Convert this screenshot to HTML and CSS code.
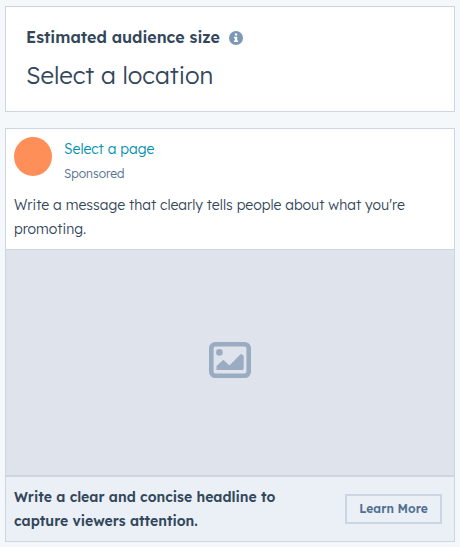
FILE: index.html
```html
<!DOCTYPE html>
<html lang="en">
<head>
<meta charset="utf-8">
<title>Ad preview</title>
<link rel="stylesheet" href="styles.css">
</head>
<body>
<section class="card audience">
  <div class="audience-label"><span class="label-text">Estimated audience size</span>
    <svg class="info" viewBox="0 0 14 14"><circle cx="7" cy="7" r="7" fill="#7c98b6"/><path d="M5.900 2.600h2.300v2H5.900zM5 5.800h3.200v3.600h.9V11H5V9.400h.9V7.300H5z" fill="#fff"/></svg>
  </div>
  <div class="audience-value">Select a location</div>
</section>
<section class="card ad">
  <header class="ad-header">
    <div class="avatar"></div>
    <div class="ad-meta">
      <a class="page-name">Select a page</a>
      <span class="sponsored">Sponsored</span>
    </div>
  </header>
  <p class="message">Write a message that clearly tells people about what you're<br>promoting.</p>
  <div class="media">
    <svg class="picture" viewBox="0 0 42 36"><rect x="2.300" y="2.300" width="37.400" height="31.400" rx="4" fill="none" stroke="#99acc2" stroke-width="4.600"/><circle cx="10.400" cy="10.400" r="3.300" fill="#99acc2"/><path d="M7.500 28v-4l6-5.600q.8-.7 1.600 0l5.400 5L31.300 12.500q.9-.8 1.800 0L34.700 14V26.500q0 1.500-1.500 1.500z" fill="#99acc2"/></svg>
  </div>
  <footer class="ad-footer">
    <p class="headline">Write a clear and concise headline to<br>capture viewers attention.</p>
    <button class="cta">Learn More</button>
  </footer>
</section>
</body>
</html>
```
FILE: styles.css
```css
* { box-sizing: border-box; }
body {
  margin: 0;
  padding: 6px 5px 5px;
  height: 547px;
  overflow: hidden;
  background: #f5f8fa;
  color: #33475b;
  font-family: "Lexend Deca", "Open Sans", sans-serif;
  font-weight: 300;
  font-size: 14px;
  line-height: 24px;
}
p { margin: 0; }
.card { background: #fff; border: 1px solid #cbd6e2; }
.audience { height: 106px; padding: 18px 20px; margin-bottom: 16px; }
.audience-label { display: flex; align-items: center; gap: 9px; font-size: 16px; font-weight: 600; }
.label-text { width: 194px; white-space: nowrap; }
.info { width: 14px; height: 14px; margin-top: 1px; }
.audience-value { margin-top: 7px; font-size: 24px; line-height: 38px; white-space: nowrap; }
.ad { height: 414px; display: flex; flex-direction: column; }
.ad-header { display: flex; gap: 12px; padding: 8px 8px 0; height: 64px; }
.avatar { width: 38px; height: 39px; border-radius: 50%; background: #ff8f59; }
.ad-meta { display: flex; flex-direction: column; gap: 1px; }
.page-name { color: #0091ae; }
.sponsored { color: #516f90; font-size: 12px; }
.message { height: 56px; padding: 0 8px; white-space: nowrap; }
.media { height: 226px; border-top: 1px solid #cbd6e2; background: #dfe3eb; display: flex; align-items: center; justify-content: center; }
.picture { width: 42px; height: 36px; margin-top: -5px; }
.ad-footer { flex: 1; display: flex; align-items: center; justify-content: space-between; padding: 0 12px 0 8px; border-top: 2px solid #cbd6e2; background: #eaf0f6; }
.headline { font-weight: 600; white-space: nowrap; }
.cta { width: 97px; height: 30px; padding: 0; border: 2px solid #cbd6e2; background: transparent; color: #506e91; font: inherit; font-size: 12px; line-height: 24px; font-weight: 600; }
```
